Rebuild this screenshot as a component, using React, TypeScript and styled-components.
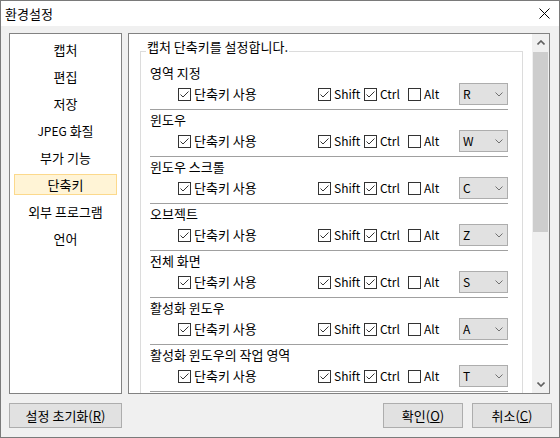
import styled, { createGlobalStyle } from "styled-components"

const GlobalStyle = createGlobalStyle`
  html, body {
    margin: 0;
    padding: 0;
    background: #ffffff;
  }
  body {
    font-family: "Noto Sans CJK KR", "Noto Sans", sans-serif;
    font-size: 13px;
    color: #000000;
  }
`

const Window = styled.div`
  width: 560px;
  height: 438px;
  box-sizing: border-box;
  border: 1px solid #7a7a7a;
  display: flex;
  flex-direction: column;
  background: #f0f0f0;
`

const TitleBar = styled.div`
  height: 25px;
  flex: none;
  background: #ffffff;
  display: flex;
  align-items: center;
  justify-content: space-between;
  padding-left: 4px;
`

const Title = styled.span`
  line-height: 16px;
`

const CloseButton = styled.div`
  width: 30px;
  height: 25px;
  display: flex;
  align-items: center;
  justify-content: center;
`

const Body = styled.div`
  flex: 1;
  display: flex;
  flex-direction: column;
  gap: 9px;
  padding: 7px 9px 9px 8px;
`

const Main = styled.div`
  display: flex;
  gap: 6px;
  height: 361px;
  flex: none;
`

const NavList = styled.ul`
  width: 113px;
  box-sizing: border-box;
  border: 1px solid #828282;
  background: #ffffff;
  margin: 0;
  padding: 5px 0 0;
  list-style: none;
`

const NavItem = styled.li<{ $active?: boolean }>`
  height: 21px;
  margin: 0 4px 6px;
  box-sizing: border-box;
  border: 1px solid ${(p) => (p.$active ? "#fcd98c" : "transparent")};
  background: ${(p) => (p.$active ? "#fff4d6" : "transparent")};
  display: flex;
  align-items: center;
  justify-content: center;
  line-height: 15px;
  white-space: nowrap;
`

const Latin = styled.span`
  font-size: 12px;
`

const Panel = styled.div`
  flex: 1;
  box-sizing: border-box;
  border: 1px solid #828282;
  background: #ffffff;
  display: flex;
  overflow: hidden;
`

const ScrollArea = styled.div`
  flex: 1;
  overflow: hidden;
  padding: 7px 9px 0 11px;
`

const GroupBox = styled.fieldset`
  margin: 0;
  min-width: 0;
  padding: 3px 9px 0 9px;
  border: 1px solid #dcdcdc;
`

const GroupTitle = styled.legend`
  margin-left: -4px;
  padding: 0 1px 8px;
  line-height: 12px;
  white-space: nowrap;
`

const ShortcutRow = styled.div`
  height: 47px;
  display: flex;
  flex-direction: column;
`

const RowLabel = styled.div`
  height: 18px;
  line-height: 18px;
  white-space: nowrap;
`

const Controls = styled.div`
  display: grid;
  grid-template-columns: 140px 46px 44px 51px 49px;
  align-items: center;
  height: 22px;
  margin: 1px 0 0 28px;
`

const Separator = styled.div`
  width: 358px;
  height: 1px;
  margin-top: 4px;
  background: #a0a0a0;
`

const CheckLabel = styled.label<{ $latin?: boolean }>`
  display: flex;
  align-items: center;
  gap: 3px;
  white-space: nowrap;
  line-height: 16px;
  font-size: ${(p) => (p.$latin ? "12px" : "13px")};
`

const Box = styled.span`
  width: 13px;
  height: 13px;
  flex: none;
  box-sizing: border-box;
  border: 1px solid #333333;
  background: #ffffff;
  display: flex;
`

const Select = styled.div`
  width: 49px;
  height: 22px;
  box-sizing: border-box;
  border: 1px solid #adadad;
  background: #e1e1e1;
  display: flex;
  align-items: center;
  justify-content: space-between;
  padding: 0 4px 0 3px;
  font-size: 12px;
  line-height: 16px;
`

const ScrollBar = styled.div`
  width: 17px;
  flex: none;
  background: #f0f0f0;
  display: flex;
  flex-direction: column;
`

const ScrollArrow = styled.div`
  height: 17px;
  flex: none;
  display: flex;
  align-items: center;
  justify-content: center;
`

const ScrollThumb = styled.div`
  height: 180px;
  margin: 1px 1px 0;
  background: #cdcdcd;
`

const ScrollTrack = styled.div`
  flex: 1;
`

const Footer = styled.div`
  display: flex;
  height: 25px;
  flex: none;
  gap: 9px;
  margin-right: -2px;
`

const Spacer = styled.div`
  flex: 1;
`

const Button = styled.button<{ $wide?: boolean }>`
  width: ${(p) => (p.$wide ? "113px" : "80px")};
  height: 25px;
  box-sizing: border-box;
  border: 1px solid #adadad;
  background: #e1e1e1;
  font-family: inherit;
  font-size: 13px;
  color: #000000;
  padding: 0;
  display: flex;
  align-items: center;
  justify-content: center;
  white-space: nowrap;
  line-height: 16px;
`

const navItems = [
  "캡처",
  "편집",
  "저장",
  "JPEG 화질",
  "부가 기능",
  "단축키",
  "외부 프로그램",
  "언어",
]

const shortcuts = [
  { label: "영역 지정", key: "R" },
  { label: "윈도우", key: "W" },
  { label: "윈도우 스크롤", key: "C" },
  { label: "오브젝트", key: "Z" },
  { label: "전체 화면", key: "S" },
  { label: "활성화 윈도우", key: "A" },
  { label: "활성화 윈도우의 작업 영역", key: "T" },
]

const CheckBox = ({
  checked,
  label,
  latin,
}: {
  checked?: boolean
  label: string
  latin?: boolean
}) => (
  <CheckLabel $latin={latin}>
    <Box>
      {checked && (
        <svg width="11" height="11" viewBox="0 0 11 11">
          <polyline
            points="1.5,5.5 4,8 9.5,2.5"
            fill="none"
            stroke="#333333"
            strokeWidth="1"
          />
        </svg>
      )}
    </Box>
    {label}
  </CheckLabel>
)

const Chevron = ({ up }: { up?: boolean }) => (
  <svg width="8" height="5" viewBox="0 0 8 5">
    <polyline
      points={up ? "0.5,4.5 4,1 7.5,4.5" : "0.5,0.5 4,4 7.5,0.5"}
      fill="none"
      stroke="#606060"
      strokeWidth="1.6"
    />
  </svg>
)

export default function App() {
  return (
    <>
      <GlobalStyle />
      <Window>
        <TitleBar>
          <Title>환경설정</Title>
          <CloseButton>
            <svg width="11" height="11" viewBox="0 0 11 11">
              <path d="M0.5 0.5 L10.5 10.5 M10.5 0.5 L0.5 10.5" stroke="#000" strokeWidth="1" />
            </svg>
          </CloseButton>
        </TitleBar>
        <Body>
          <Main>
            <NavList>
              {navItems.map((item) => (
                <NavItem key={item} $active={item === "단축키"}>
                  {item.startsWith("JPEG") ? (
                    <>
                      <Latin>JPEG</Latin>&nbsp;화질
                    </>
                  ) : (
                    item
                  )}
                </NavItem>
              ))}
            </NavList>
            <Panel>
              <ScrollArea>
                <GroupBox>
                  <GroupTitle>캡처 단축키를 설정합니다.</GroupTitle>
                  {shortcuts.map((s) => (
                    <ShortcutRow key={s.label}>
                      <RowLabel>{s.label}</RowLabel>
                      <Controls>
                        <CheckBox checked label="단축키 사용" />
                        <CheckBox checked latin label="Shift" />
                        <CheckBox checked latin label="Ctrl" />
                        <CheckBox latin label="Alt" />
                        <Select>
                          <span>{s.key}</span>
                          <svg width="8" height="5" viewBox="0 0 8 5">
                            <polyline points="0.5,0.5 4,4 7.5,0.5" fill="none" stroke="#707070" strokeWidth="1" />
                          </svg>
                        </Select>
                      </Controls>
                      <Separator />
                    </ShortcutRow>
                  ))}
                </GroupBox>
              </ScrollArea>
              <ScrollBar>
                <ScrollArrow>
                  <Chevron up />
                </ScrollArrow>
                <ScrollThumb />
                <ScrollTrack />
                <ScrollArrow>
                  <Chevron />
                </ScrollArrow>
              </ScrollBar>
            </Panel>
          </Main>
          <Footer>
            <Button $wide>
              설정 초기화(<u>R</u>)
            </Button>
            <Spacer />
            <Button>
              확인(<u>O</u>)
            </Button>
            <Button>
              취소(<u>C</u>)
            </Button>
          </Footer>
        </Body>
      </Window>
    </>
  )
}
